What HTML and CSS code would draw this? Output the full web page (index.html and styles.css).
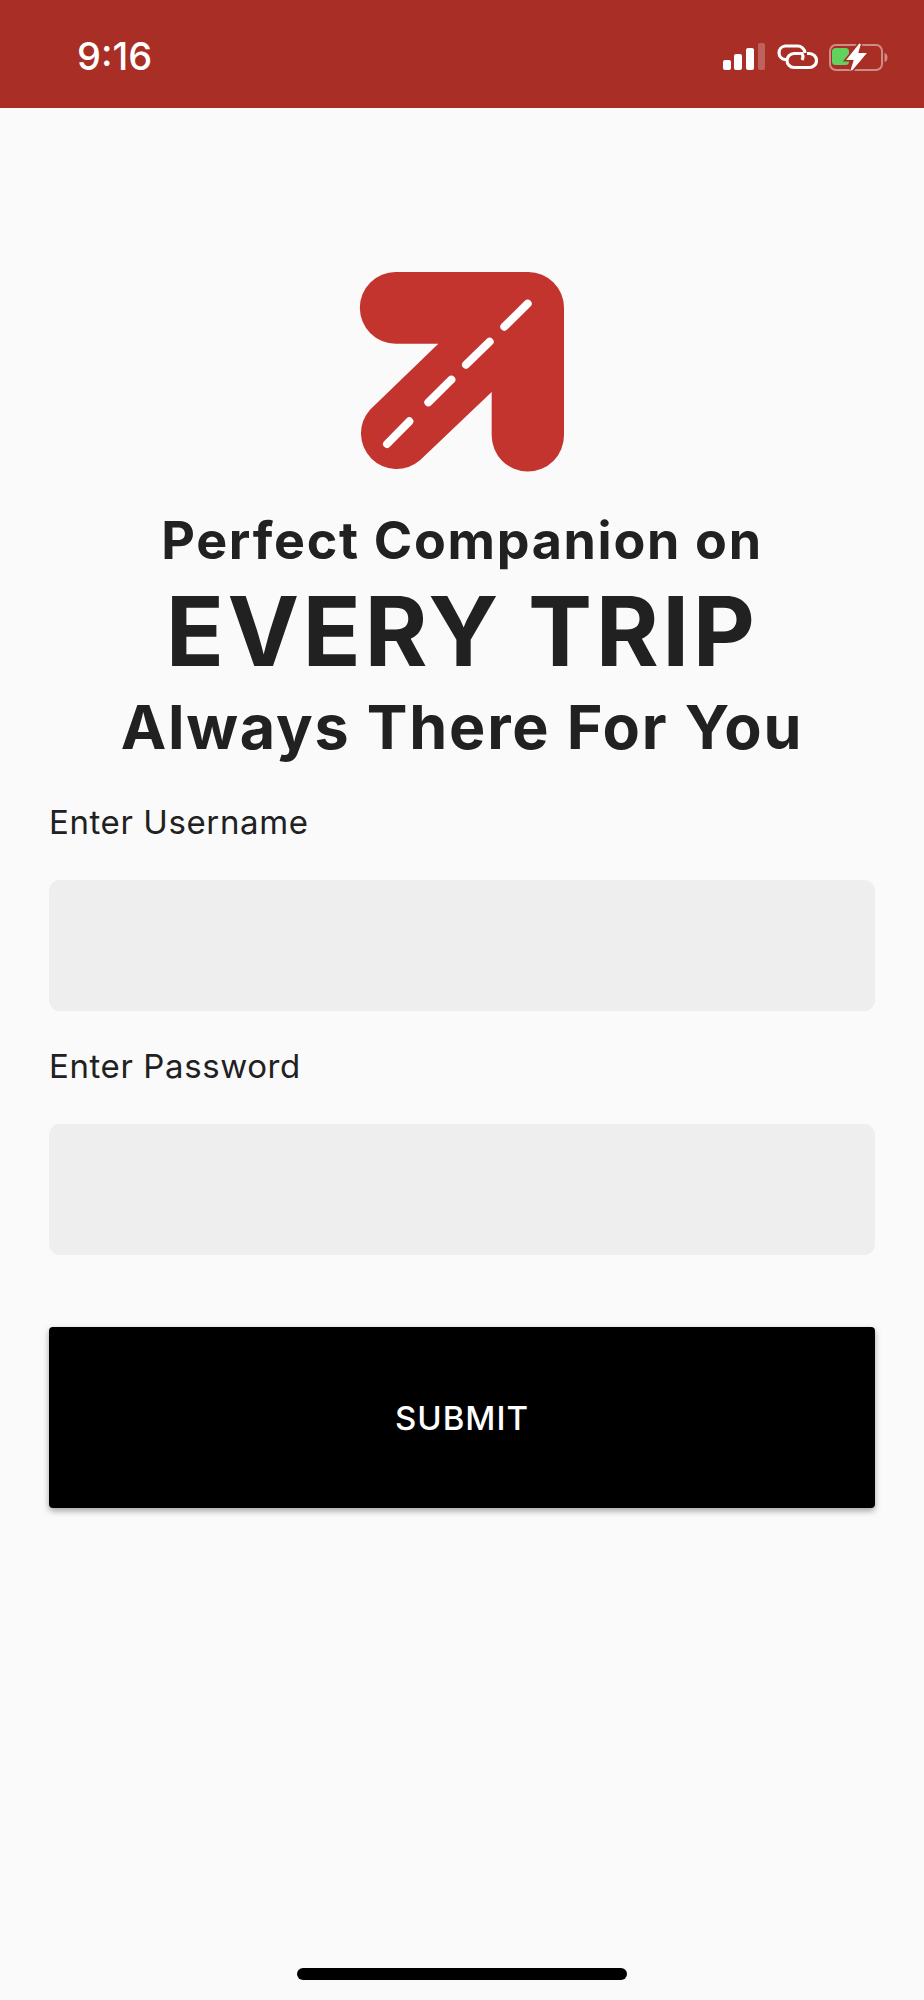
FILE: index.html
```html
<!DOCTYPE html>
<html lang="en">

<head>
    <meta http-equiv="Content-Type" content="text/html; charset=utf-8" />
    <meta name="viewport" content="width=device-width, initial-scale=1.0, shrink-to-fit=no">
    <title>Every Trip</title>
    <link rel="stylesheet" href="styles.css">
</head>

<body>
    <div id="main">
        <div class="statusbar">
            <span class="time">9:16</span>
            <div class="statusicons">
                <svg class="signal" width="42" height="28" viewBox="0 0 42 28">
                    <rect x="0" y="17" width="8" height="10" rx="2" fill="#fff" />
                    <rect x="11" y="11" width="8" height="16" rx="2" fill="#fff" />
                    <rect x="23" y="5" width="8" height="22" rx="2" fill="#fff" />
                    <rect x="35" y="0" width="7" height="27" rx="2" fill="#fff" fill-opacity="0.25" />
                </svg>
                <svg class="link" width="42" height="26" viewBox="0 0 42 26" fill="none" stroke="#fff" stroke-width="3.2">
                    <path d="M10 15.5 H9 A6.8 6.8 0 0 1 9 2 H21 A7.5 7.5 0 0 1 29 9" />
                    <path d="M31 9.5 H33.5 A7 7 0 0 1 33.5 23.5 H18 A7 7 0 0 1 18 9.5 H26 A6.5 6.5 0 0 1 26 16" />
                </svg>
                <svg class="battery" width="60" height="28" viewBox="0 0 60 28">
                    <rect x="1" y="2" width="52" height="25" rx="6" fill="none" stroke="#fff" stroke-opacity="0.45" stroke-width="2" />
                    <path d="M55.5 10 C59.5 10.5 59.5 18.5 55.5 19 Z" fill="#fff" fill-opacity="0.45" />
                    <rect x="3" y="5" width="17" height="17" rx="3.5" fill="#62d25f" />
                    <path d="M31 1 L19 16 H26 L22.5 27 L36 11 H28 Z" fill="#a82e26" stroke="#a82e26" stroke-width="5" />
                    <path d="M31 1 L19 16 H26 L22.5 27 L36 11 H28 Z" fill="#fff" stroke="#fff" stroke-width="1.8" />
                </svg>
            </div>
        </div>

        <div class="content">
            <svg class="logo" width="204" height="199" viewBox="60 65 612 597">
                <path fill="#c4342e" d="M167 65 H565 A107 107 0 0 1 672 172 V555 A107 107 0 0 1 455 555 V425 L240 630 A107 107 0 0 1 90 478 L295 280 H167 A107.5 107.5 0 0 1 167 65 Z" />
                <path stroke="#fff" stroke-width="24" stroke-linecap="round" fill="none"
                    d="M141 581 L208 513 M265 456 L334 388 M378 343 L449 274 M493 229 L563 160" />
            </svg>

            <h1 class="headline">
                <span class="line first">Perfect Companion on</span>
                <span class="line big">EVERY TRIP</span>
                <span class="line last">Always There For You</span>
            </h1>

            <div class="form">
                <label class="label">Enter Username</label>
                <div class="input"></div>
                <label class="label">Enter Password</label>
                <div class="input"></div>
                <div class="submit">SUBMIT</div>
            </div>
        </div>

        <div class="homebar"></div>
    </div>
</body>

</html>
```

FILE: styles.css
```css
html {
    padding: 0;
    margin: 0;
    font-family: Inter, "Liberation Sans", sans-serif;
}

body {
    padding: 0;
    margin: 0;
    background-color: #fafafa;
}

#main {
    height: 2000px;
    width: 924px;
    display: flex;
    flex-flow: column nowrap;
}

.statusbar {
    height: 108px;
    flex-shrink: 0;
    background-color: #a82e26;
    display: flex;
    flex-flow: row nowrap;
    justify-content: space-between;
    align-items: center;
    padding: 0 35px 0 77px;
    box-sizing: border-box;
}

.time {
    color: white;
    font-size: 38px;
    font-weight: 500;
    margin-top: 4px;
}

.statusicons {
    display: flex;
    flex-flow: row nowrap;
    align-items: center;
    gap: 11px;
    margin-top: 5px;
}

.content {
    flex-grow: 1;
    display: flex;
    flex-flow: column nowrap;
    align-items: center;
    padding: 164px 49px 0;
}

.logo {
    display: block;
    overflow: visible;
}

.headline {
    margin: 37px 0 0;
    color: #212121;
    font-weight: 700;
    text-align: center;
    white-space: nowrap;
}

.line {
    display: block;
}

.first {
    font-size: 52px;
    line-height: 66px;
    letter-spacing: 1.7px;
}

.big {
    font-size: 96px;
    line-height: 114px;
    letter-spacing: 3.5px;
}

.last {
    font-size: 61px;
    line-height: 78px;
    letter-spacing: 1.8px;
}

.form {
    width: 100%;
    margin-top: 36px;
    display: flex;
    flex-flow: column nowrap;
}

.label {
    color: #212121;
    font-size: 33px;
    line-height: 40px;
    letter-spacing: 0.6px;
}

.input {
    height: 131px;
    margin: 38px 0 35px;
    background-color: #eeeeee;
    border-radius: 11px;
}

.submit {
    height: 181px;
    margin-top: 37px;
    background-color: black;
    border-radius: 4px;
    box-shadow: 0 3px 6px rgba(0, 0, 0, 0.35);
    color: white;
    font-size: 33px;
    font-weight: 500;
    letter-spacing: 1px;
    display: flex;
    justify-content: center;
    align-items: center;
}

.homebar {
    flex-shrink: 0;
    align-self: center;
    width: 330px;
    height: 12px;
    margin-bottom: 20px;
    background-color: black;
    border-radius: 6px;
}
```
